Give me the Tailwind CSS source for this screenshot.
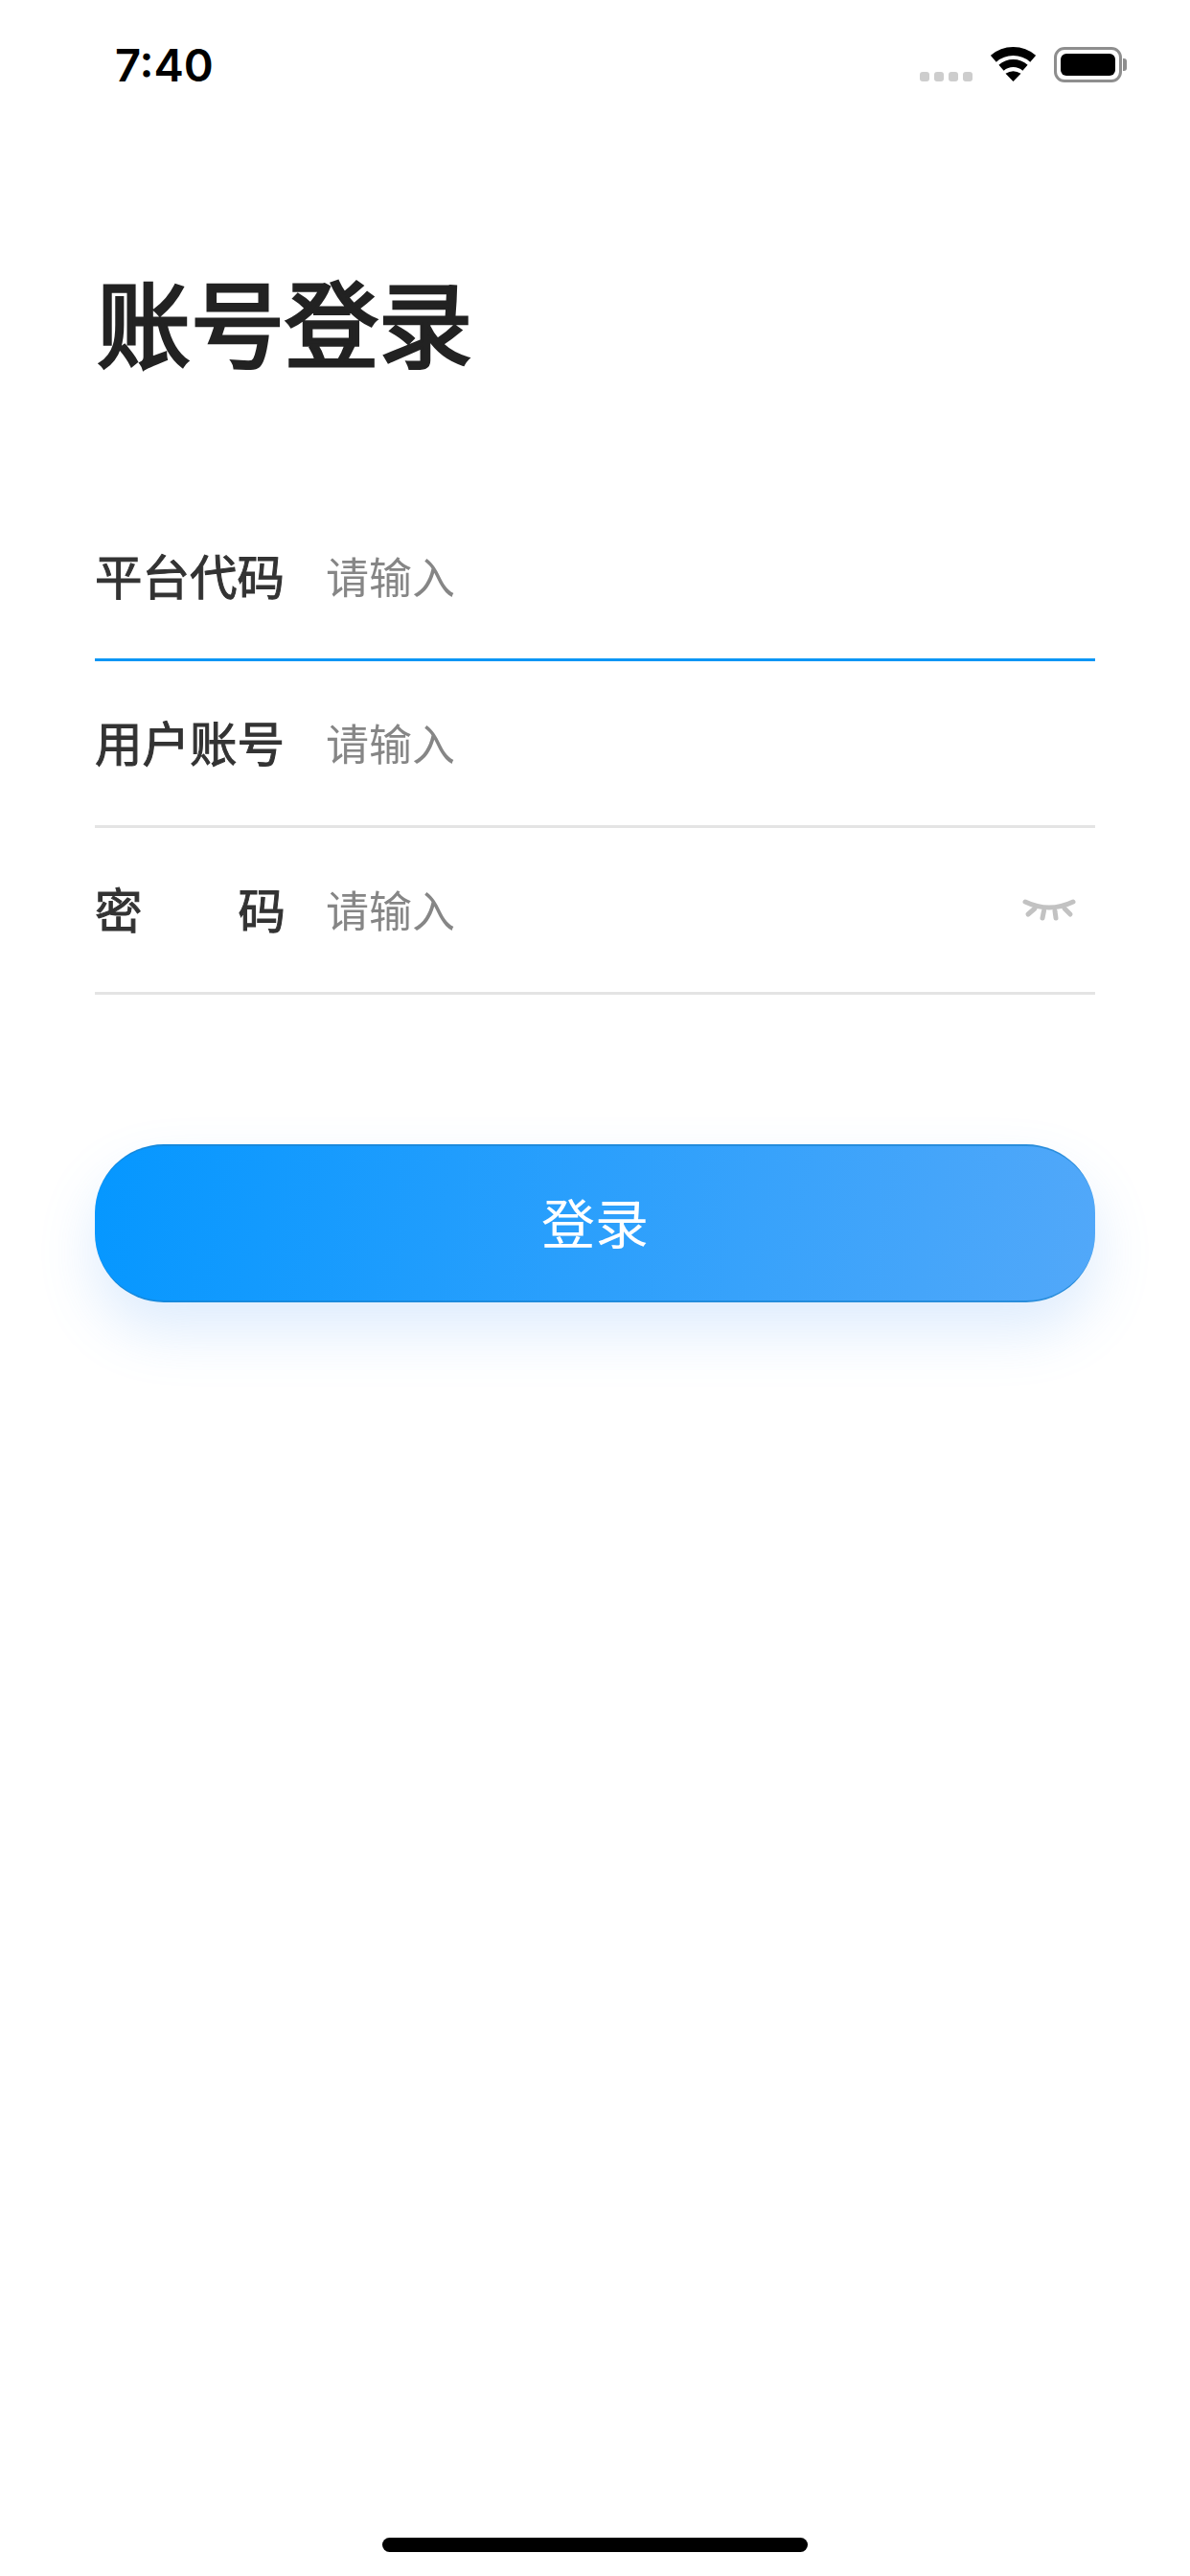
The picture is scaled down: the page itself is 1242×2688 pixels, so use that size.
<!DOCTYPE html>
<html lang="zh-CN">
<head>
  <meta charset="UTF-8">
  <title>账号登录</title>
  <script src="https://cdn.jsdelivr.net/npm/@tailwindcss/browser@4"></script>
</head>
<body class="bg-white font-['Noto_Sans_CJK_SC','Noto_Sans',sans-serif]">
  <div class="w-[1242px] h-[2688px] flex flex-col overflow-hidden">

    <!-- status bar -->
    <header class="h-[132px] shrink-0 flex justify-between pl-[120px] pr-[66px] pt-[50px]">
      <span class="font-['Inter',sans-serif] text-[47px] leading-[36px] font-semibold text-black">7:40</span>
      <div class="flex items-start -mt-[1px]">
        <div class="flex gap-[5px] mt-[26px] mr-[19px]">
          <span class="w-[10px] h-[10px] rounded-[3px] bg-[#cdcdcd]"></span>
          <span class="w-[10px] h-[10px] rounded-[3px] bg-[#cdcdcd]"></span>
          <span class="w-[10px] h-[10px] rounded-[3px] bg-[#cdcdcd]"></span>
          <span class="w-[10px] h-[10px] rounded-[3px] bg-[#cdcdcd]"></span>
        </div>
        <svg class="w-[47px] h-[36px] mr-[19px]" viewBox="0 0 47 36" fill="none">
          <path d="M2.83 12.23A31.5 31.5 0 0 1 44.17 12.23" stroke="#000" stroke-width="9"/>
          <path d="M11.04 21.66A19 19 0 0 1 35.96 21.66" stroke="#000" stroke-width="8"/>
          <path d="M23.5 36L15.5 27.8Q23.5 22.6 31.5 27.8Z" fill="#000"/>
        </svg>
        <div class="w-[71px] h-[37px] border-[3px] border-[#8e8e8e] rounded-[11px] p-[4px]">
          <div class="w-full h-full bg-black rounded-[6px]"></div>
        </div>
        <span class="w-[4px] h-[13px] mt-[12px] ml-[1px] bg-[#8e8e8e] rounded-r-[3px]"></span>
      </div>
    </header>

    <main class="px-[99px] will-change-transform">
      <h1 class="mt-[141px] h-[120px] text-[98px] leading-[120px] pl-[2px] font-normal [-webkit-text-stroke:3.2px_#222222] text-[#222222]">账号登录</h1>

      <div class="mt-[123px]">
        <div class="h-[174px] flex items-center border-b-[3px] border-[#0a96f5]">
          <span class="-mt-[3px] w-[199px] text-[49.5px] leading-none font-normal [-webkit-text-stroke:1px_#333333] text-[#333333]">平台代码</span>
          <span class="-mt-[3px] ml-[42px] text-[45px] leading-none font-normal text-[#868686]">请输入</span>
        </div>
        <div class="h-[174px] flex items-center border-b-[3px] border-[#e4e4e4]">
          <span class="-mt-[3px] w-[199px] text-[49.5px] leading-none font-normal [-webkit-text-stroke:1px_#333333] text-[#333333]">用户账号</span>
          <span class="-mt-[3px] ml-[42px] text-[45px] leading-none font-normal text-[#868686]">请输入</span>
        </div>
        <div class="h-[174px] flex items-center border-b-[3px] border-[#e4e4e4]">
          <span class="-mt-[3px] w-[199px] flex justify-between text-[49.5px] leading-none font-normal [-webkit-text-stroke:1px_#333333] text-[#333333]"><span>密</span><span>码</span></span>
          <span class="-mt-[3px] ml-[42px] text-[45px] leading-none font-normal text-[#868686]">请输入</span>
          <svg class="ml-auto mr-[20px] w-[56px] h-[24px]" viewBox="0 0 56 24" fill="none" stroke="#c2c2c2" stroke-width="5" stroke-linecap="round">
            <path d="M3 3Q28 15 53 3"/>
            <path d="M13 10L6 16"/>
            <path d="M22.5 12.5L21 20"/>
            <path d="M34 12.5L35 20"/>
            <path d="M44 10L50 16"/>
          </svg>
        </div>
      </div>

      <button class="mt-[156px] w-[1044px] h-[165px] rounded-[72px] bg-linear-[100deg] from-[#0597ff] to-[#52a8f9] border-y-[2px] border-[#1b83cf]/70 shadow-[0_30px_60px_rgba(90,160,245,0.2)] text-white text-[56px] leading-none"><span class="block -mt-[5px]">登录</span></button>
    </main>

    <!-- home indicator -->
    <div class="mt-auto mb-[25px] mx-auto w-[444px] h-[15px] rounded-full bg-black"></div>
  </div>
</body>
</html>
